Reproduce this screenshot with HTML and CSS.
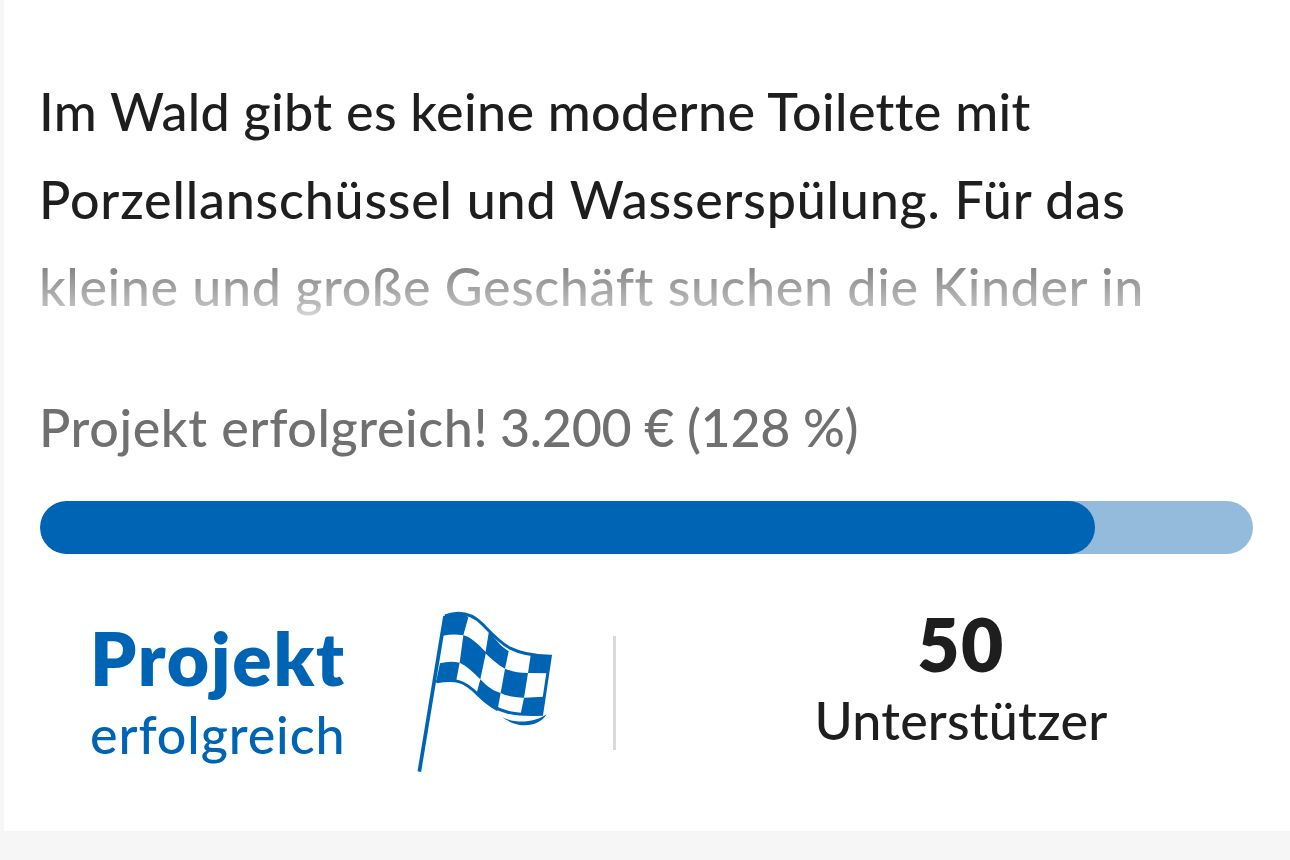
FILE: index.html
```html
<!DOCTYPE html>
<html lang="de">
<head>
    <meta charset="UTF-8">
    <meta name="viewport" content="width=device-width, initial-scale=1.0">
    <title>Projekt</title>
    <link rel="stylesheet" href="styles.css">
</head>
<body>
    <div class="card">
        <p class="teaser">
            <span class="line line1">Im Wald gibt es keine moderne Toilette mit</span>
            <span class="line line2">Porzellanschüssel und Wasserspülung. Für das</span>
            <span class="line line3">kleine und große Geschäft suchen die Kinder in</span>
        </p>

        <p class="status"><span>Projekt erfolgreich!</span> <span class="amount">3.200 € (128 %)</span></p>
        <div class="progress">
            <div class="progress-bar" style="width: 87%"></div>
        </div>

        <div class="facts">
            <div class="result">
                <div class="result-text">
                    <strong>Projekt</strong>
                    <span>erfolgreich</span>
                </div>
                <svg class="flag" viewBox="50 60 408 492" aria-hidden="true">
                    <path class="outline" d="M137 78 C176 63 214 67 250 103 C307 162 333 196 453 199 L427 373 C348 376 293 371 235 313 C192 270 169 267 111 275"/>
                    <path class="pole" d="M137 78 L60 545"/>
                    <path d="M137 78 C165 66 190 66 207 82 L192 136 Q164 130 130 137Z"/>
                    <path d="M192 136 C213 140 236 162 260 187 L243 268 C222 247 203 228 181 218Z"/>
                    <path d="M122 220 Q151 212 181 218 L171 271 Q143 268 110 276Z"/>
                    <path d="M269 123 C288 148 304 169 328 184 L317 236 C295 225 276 206 258 190Z"/>
                    <path d="M317 236 C340 245 358 249 386 249 L374 323 C345 322 324 319 304 309Z"/>
                    <path d="M243 268 C263 290 282 303 304 309 L294 364 C268 350 248 331 231 313Z"/>
                    <path d="M394 196 L454 198 L446 250 L386 249Z"/>
                    <path d="M374 323 L434 320 L427 374 L364 372Z"/>
                    <path d="M305 379 C338 400 400 402 442 373 C414 417 350 415 305 379Z"/>
                </svg>
            </div>
            <div class="supporters">
                <strong>50</strong>
                <span>Unterstützer</span>
            </div>
        </div>
    </div>
</body>
</html>
```
FILE: styles.css
```css
body {
    margin: 0;
    background-color: #f6f6f6;
    font-family: Lato, "Open Sans", sans-serif;
    font-size: 52px;
    font-weight: 500;
    color: #1e1e1e;
    overflow: hidden;
}
.card {
    box-sizing: border-box;
    height: 831px;
    margin-left: 4px;
    padding: 68px 37px 0 36px;
    background-color: #fff;
}
p {
    margin: 0;
    white-space: nowrap;
}
.teaser {
    position: relative;
    height: 263px;
    line-height: 87.5px;
}
.line {
    display: block;
    margin-left: -1px;
}
.line1 {
    letter-spacing: .36px;
}
.line2 {
    letter-spacing: .8px;
}
.line3 {
    letter-spacing: .6px;
}
/* fades out the last line */
.teaser::after {
    content: "";
    position: absolute;
    left: 0;
    right: 0;
    bottom: 0;
    height: 100px;
    background: linear-gradient(rgba(255, 255, 255, 0), rgba(255, 255, 255, .46) 36%, rgba(255, 255, 255, .7) 74%, #fff);
}
.status {
    margin: 63px 0 0 -1px;
    line-height: 66px;
    letter-spacing: .6px;
    color: #707070;
}
.status .amount {
    margin-left: -2px;
    letter-spacing: -.3px;
}
.progress {
    height: 53px;
    margin-top: 41px;
    border-radius: 27px;
    background-color: #95bbdc;
    overflow: hidden;
}
.progress-bar {
    height: 100%;
    border-radius: 27px;
    background-color: #0064b4;
}
.facts {
    display: flex;
    align-items: flex-start;
    padding-top: 56px;
}
.result {
    display: flex;
    width: 573px;
    color: #0064b4;
}
.result-text {
    width: 326px;
    margin: 9px 0 0 50px;
    letter-spacing: .9px;
}
.facts strong, .facts span {
    display: block;
    line-height: 78px;
}
.facts strong {
    font-size: 73px;
    font-weight: 800;
}
.facts span {
    margin-top: -2px;
}
.result-text strong {
    letter-spacing: 1.8px;
}
.flag {
    width: 136px;
    height: 164px;
    fill: #0064b4;
}
.flag .outline, .flag .pole {
    fill: none;
    stroke: #0064b4;
    stroke-width: 9;
}
.flag .pole {
    stroke-width: 11;
}
.supporters {
    position: relative;
    flex: 1;
    padding-left: 56px;
    text-align: center;
    letter-spacing: .2px;
}
.supporters strong {
    margin-top: -5px;
    letter-spacing: 1.5px;
}
.supporters::before {
    content: "";
    position: absolute;
    left: 0;
    top: 26px;
    width: 3px;
    height: 114px;
    background-color: #dadada;
}
```
